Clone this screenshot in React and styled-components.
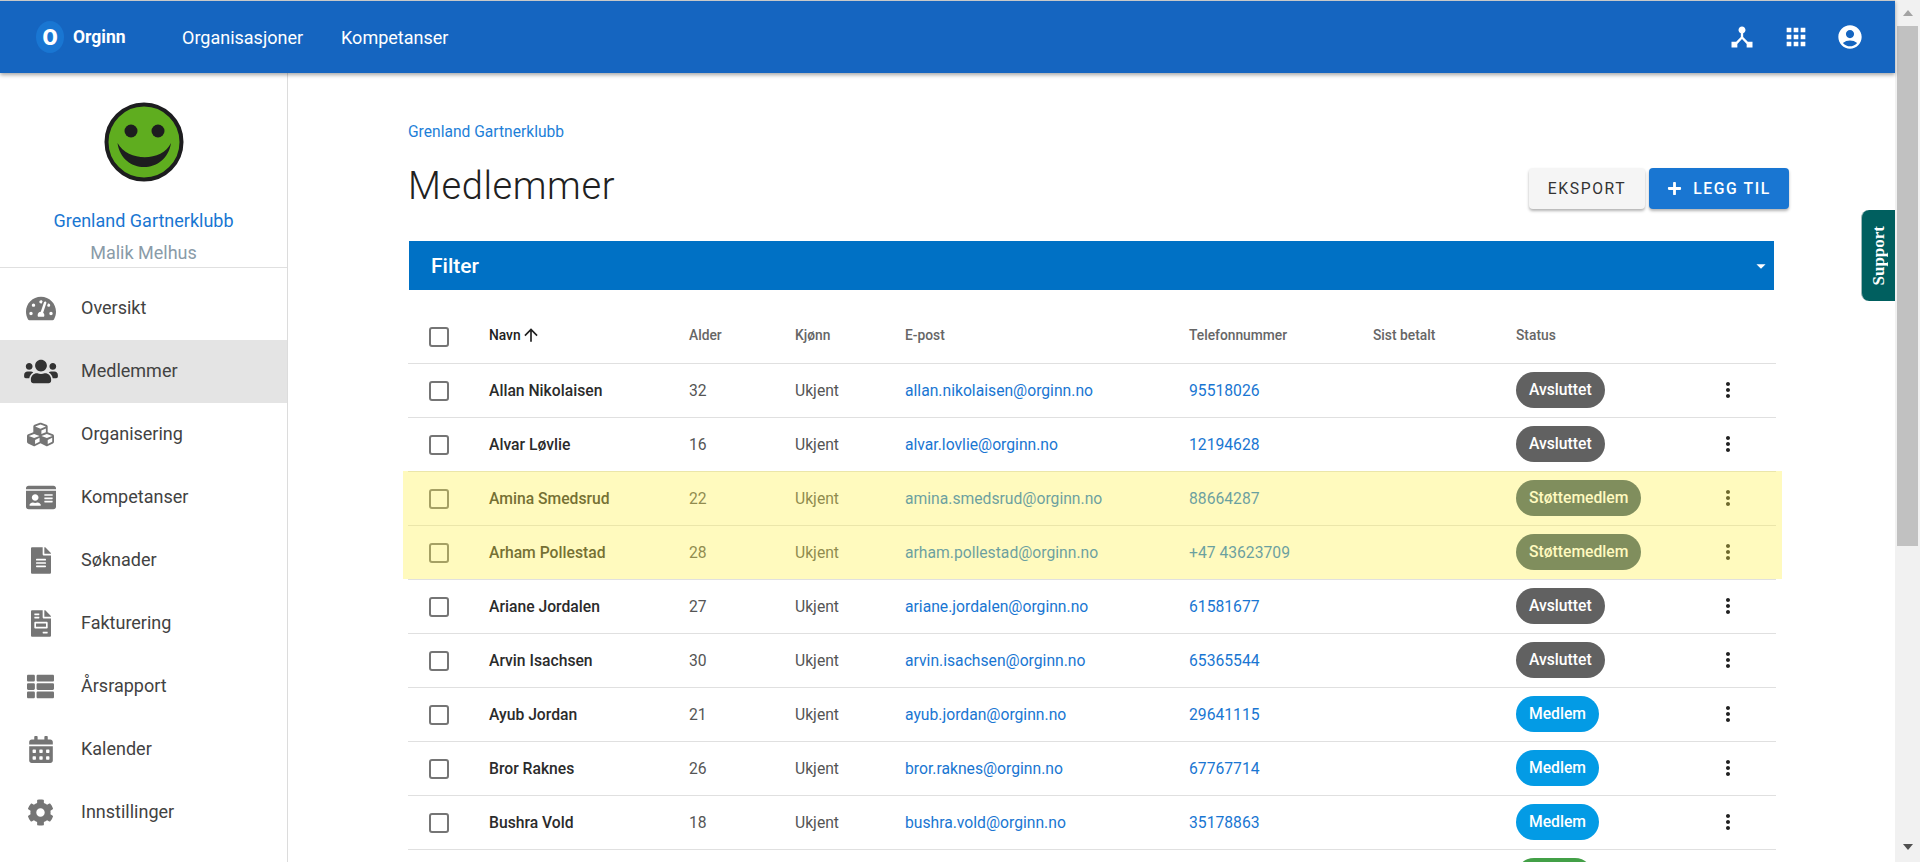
import React from 'react';
import styled, { createGlobalStyle } from 'styled-components';
import { MdDeviceHub, MdApps, MdAccountCircle, MdMoreVert, MdArrowUpward, MdArrowDropDown } from 'react-icons/md';
import { FaTachometerAlt, FaUsers, FaCubes, FaIdCard, FaFileAlt, FaFileInvoice, FaThList, FaCalendarAlt, FaCog, FaPlus } from 'react-icons/fa';

const GlobalStyle = createGlobalStyle`
  html, body {
    margin: 0;
    height: 862px;
    overflow: hidden;
    background: #fff;
    font-family: Roboto, 'Liberation Sans', sans-serif;
  }
  * { box-sizing: border-box; }
`;

const Shell = styled.div`
  display: flex;
  height: 862px;
  overflow: hidden;
`;

const Page = styled.div`
  position: relative;
  flex: 1;
  min-width: 0;
  display: flex;
  flex-direction: column;
`;

const TopBar = styled.header`
  position: relative;
  z-index: 3;
  flex: none;
  height: 73px;
  display: flex;
  align-items: center;
  border-top: 1px solid #c8c8c8;
  background: #1565c0;
  color: #fff;
  padding: 0 31px 0 36px;
  box-shadow: 0 2px 4px rgba(0, 0, 0, 0.35);
`;

const LogoMark = styled.div`
  width: 28px;
  height: 32px;
  border-radius: 50%;
  background: #1976d2;
  display: flex;
  align-items: center;
  justify-content: center;
  font-weight: 900;
  font-size: 22px;
`;

const LogoText = styled.div`
  margin-left: 9px;
  width: 109px;
  font-weight: 700;
  font-size: 17.5px;
`;

const NavLink = styled.a`
  font-size: 18px;
  font-weight: 400;
  margin-right: 38px;
`;

const TopActions = styled.div`
  margin-left: auto;
  display: flex;
  gap: 26px;
  font-size: 28px;
  svg { display: block; }
`;

const Body = styled.div`
  flex: 1;
  min-height: 0;
  display: flex;
`;

const Sidebar = styled.aside`
  flex: none;
  width: 288px;
  border-right: 1px solid #dcdcdc;
`;

const Profile = styled.div`
  height: 195px;
  padding-top: 29px;
  display: flex;
  flex-direction: column;
  align-items: center;
  border-bottom: 1px solid #e0e0e0;
`;

const OrgName = styled.div`
  margin-top: 27px;
  font-size: 18px;
  line-height: 24px;
  color: #1976d2;
`;

const UserName = styled.div`
  margin-top: 8px;
  font-size: 18px;
  line-height: 24px;
  color: #8a9ba8;
`;

const Menu = styled.nav`
  padding-top: 9px;
`;

const MenuItem = styled.a`
  height: 63px;
  display: flex;
  align-items: center;
  font-size: 18px;
  font-weight: 400;
  padding-bottom: 2px;
  color: #424242;
  background: ${p => (p.$active ? '#e4e4e4' : 'transparent')};
`;

const MenuIcon = styled.span`
  width: 81px;
  display: flex;
  justify-content: center;
  padding-top: 2px;
  color: ${p => (p.$active ? '#333' : '#757575')};
  svg {
    display: block;
    width: ${p => p.$width}px;
    height: 27px;
  }
`;

const Main = styled.main`
  flex: 1;
  min-width: 0;
  padding: 49px 0 0 120px;
`;

const Breadcrumb = styled.a`
  display: block;
  font-size: 15.6px;
  line-height: 20px;
  color: #1e7fd8;
`;

const TitleRow = styled.div`
  display: flex;
  align-items: center;
  justify-content: space-between;
  margin-top: 22px;
  padding-right: 106px;
  height: 49px;
`;

const Title = styled.h1`
  margin: 0 0 5px;
  font-size: 38px;
  font-weight: 300;
  color: #212121;
  letter-spacing: 0.6px;
`;

const Actions = styled.div`
  display: flex;
  gap: 4px;
`;

const Button = styled.button`
  height: 41px;
  display: flex;
  align-items: center;
  justify-content: center;
  gap: 11px;
  border: 0;
  border-radius: 4px;
  font-family: inherit;
  font-size: 15.7px;
  font-weight: ${p => (p.$primary ? 500 : 400)};
  letter-spacing: 1.6px;
  width: ${p => (p.$primary ? '140px' : '116px')};
  background: ${p => (p.$primary ? '#1976d2' : '#f5f5f5')};
  color: ${p => (p.$primary ? '#fff' : '#333')};
  box-shadow: 0 2px 3px rgba(0, 0, 0, 0.3);
  svg { font-size: 15px; }
`;

const FilterBar = styled.div`
  margin: 28px 0 0 1px;
  width: 1365px;
  height: 49px;
  display: flex;
  align-items: center;
  justify-content: space-between;
  padding: 0 2px 0 22px;
  background: #0071c5;
  color: #fff;
  font-size: 21px;
  font-weight: 500;
  svg { display: block; font-size: 22px; }
`;

const Table = styled.div`
  margin-top: 21px;
  width: 1368px;
`;

const gridColumns = '81px 200px 106px 110px 284px 184px 143px 200px 1fr';

const HeadRow = styled.div`
  display: grid;
  grid-template-columns: ${gridColumns};
  align-items: center;
  height: 53px;
  border-bottom: 1px solid #e0e0e0;
  font-size: 13.8px;
  font-weight: 500;
  color: #666;
`;

const HeadLabel = styled.span`
  display: flex;
  align-items: center;
  padding-bottom: 4px;
  color: ${p => (p.$sorted ? '#212121' : '#666')};
  svg { font-size: 20px; }
`;

const Row = styled.div`
  display: grid;
  grid-template-columns: ${gridColumns};
  align-items: center;
  height: 54px;
  border-bottom: 1px solid #e0e0e0;
  font-size: 15.7px;
  color: #555;
`;

const MarkedRows = styled.div`
  position: relative;
  &::after {
    content: '';
    position: absolute;
    inset: -1px -6px 1px -5px;
    background: rgba(255, 240, 70, 0.35);
    pointer-events: none;
  }
`;

const CheckCell = styled.span`
  padding-left: 21px;
`;

const Checkbox = styled.span`
  display: block;
  width: 20px;
  height: 20px;
  border: 2px solid #757575;
  border-radius: 3px;
`;

const Name = styled.span`
  font-weight: 500;
  color: #2b2b2b;
`;

const Link = styled.a`
  color: #1976d2;
`;

const Badge = styled.span`
  justify-self: start;
  height: 36px;
  min-width: ${p => p.$minWidth || 0}px;
  margin-bottom: 2px;
  padding: 0 13px;
  display: inline-flex;
  align-items: center;
  border-radius: 18px;
  font-size: 15.7px;
  font-weight: 500;
  color: #fff;
  background: ${p => p.$bg};
`;

const MoreCell = styled.span`
  font-size: 24px;
  margin-bottom: 2px;
  color: #212121;
  svg { display: block; }
`;

const Scrollbar = styled.div`
  flex: none;
  width: 25px;
  display: flex;
  flex-direction: column;
  align-items: center;
  background: #f1f1f1;
`;

const ScrollArrow = styled.span`
  flex: none;
  height: 26px;
  width: 100%;
  display: flex;
  justify-content: center;
  align-items: ${p => (p.$down ? 'flex-start' : 'center')};
  &::before {
    content: '';
    border-left: 5.5px solid transparent;
    border-right: 5.5px solid transparent;
    ${p => (p.$down ? 'border-top: 6px solid #505050; margin-top: 8px;' : 'border-bottom: 6px solid #a3a3a3;')}
  }
`;

const ScrollThumb = styled.div`
  flex: none;
  width: 21px;
  height: 520px;
  background: #c1c1c1;
`;

const ScrollSpace = styled.div`
  flex: 1;
`;

const SupportTab = styled.a`
  position: absolute;
  z-index: 2;
  right: 0;
  top: 210px;
  width: 34px;
  height: 91px;
  display: flex;
  align-items: center;
  justify-content: center;
  background: #005f5f;
  border-left: 1px solid #9db8b8;
  border-radius: 8px 0 0 8px;
  color: #fff;
  font-family: 'Liberation Serif', serif;
  font-weight: 700;
  font-size: 17px;
  writing-mode: vertical-rl;
  span { transform: rotate(180deg); }
`;

const menu = [
  ['Oversikt', FaTachometerAlt, 30],
  ['Medlemmer', FaUsers, 34],
  ['Organisering', FaCubes, 27],
  ['Kompetanser', FaIdCard, 30],
  ['Søknader', FaFileAlt, 20],
  ['Fakturering', FaFileInvoice, 20],
  ['Årsrapport', FaThList, 27],
  ['Kalender', FaCalendarAlt, 24],
  ['Innstillinger', FaCog, 27],
];

const statusColors = {
  Avsluttet: '#616161',
  'Støttemedlem': '#3d5a6b',
  Medlem: '#039be5',
};

const members = [
  ['Allan Nikolaisen', 32, 'allan.nikolaisen@orginn.no', '95518026', 'Avsluttet'],
  ['Alvar Løvlie', 16, 'alvar.lovlie@orginn.no', '12194628', 'Avsluttet'],
  ['Amina Smedsrud', 22, 'amina.smedsrud@orginn.no', '88664287', 'Støttemedlem'],
  ['Arham Pollestad', 28, 'arham.pollestad@orginn.no', '+47 43623709', 'Støttemedlem'],
  ['Ariane Jordalen', 27, 'ariane.jordalen@orginn.no', '61581677', 'Avsluttet'],
  ['Arvin Isachsen', 30, 'arvin.isachsen@orginn.no', '65365544', 'Avsluttet'],
  ['Ayub Jordan', 21, 'ayub.jordan@orginn.no', '29641115', 'Medlem'],
  ['Bror Raknes', 26, 'bror.raknes@orginn.no', '67767714', 'Medlem'],
  ['Bushra Vold', 18, 'bushra.vold@orginn.no', '35178863', 'Medlem'],
];

const Smiley = () => (
  <svg width="80" height="80" viewBox="0 0 80 80">
    <circle cx="40" cy="40" r="37.5" fill="#5fad1f" stroke="#1d1d1f" strokeWidth="4" />
    <circle cx="27" cy="29" r="6.5" fill="#1d1d1f" />
    <circle cx="54" cy="29" r="6.5" fill="#1d1d1f" />
    <path d="M13.5 41 C18 73 62 73 67 41 C58 60 24 60 13.5 41 Z" fill="#1d1d1f" />
  </svg>
);

const MemberRow = ({ member }) => {
  const [name, age, email, phone, status] = member;
  return (
    <Row>
      <CheckCell><Checkbox /></CheckCell>
      <Name>{name}</Name>
      <span>{age}</span>
      <span>Ukjent</span>
      <Link>{email}</Link>
      <Link>{phone}</Link>
      <span />
      <Badge $bg={statusColors[status]}>{status}</Badge>
      <MoreCell><MdMoreVert /></MoreCell>
    </Row>
  );
};

export default function App() {
  return (
    <Shell>
      <GlobalStyle />
      <Page>
        <TopBar>
          <LogoMark>O</LogoMark>
          <LogoText>Orginn</LogoText>
          <NavLink>Organisasjoner</NavLink>
          <NavLink>Kompetanser</NavLink>
          <TopActions>
            <MdDeviceHub />
            <MdApps />
            <MdAccountCircle />
          </TopActions>
        </TopBar>
        <Body>
          <Sidebar>
            <Profile>
              <Smiley />
              <OrgName>Grenland Gartnerklubb</OrgName>
              <UserName>Malik Melhus</UserName>
            </Profile>
            <Menu>
              {menu.map(([label, Icon, width]) => (
                <MenuItem key={label} $active={label === 'Medlemmer'}>
                  <MenuIcon $active={label === 'Medlemmer'} $width={width}><Icon /></MenuIcon>
                  {label}
                </MenuItem>
              ))}
            </Menu>
          </Sidebar>
          <Main>
            <Breadcrumb>Grenland Gartnerklubb</Breadcrumb>
            <TitleRow>
              <Title>Medlemmer</Title>
              <Actions>
                <Button>EKSPORT</Button>
                <Button $primary><FaPlus />LEGG TIL</Button>
              </Actions>
            </TitleRow>
            <FilterBar>
              Filter
              <MdArrowDropDown />
            </FilterBar>
            <Table>
              <HeadRow>
                <CheckCell><Checkbox /></CheckCell>
                <HeadLabel $sorted>Navn<MdArrowUpward /></HeadLabel>
                <HeadLabel>Alder</HeadLabel>
                <HeadLabel>Kjønn</HeadLabel>
                <HeadLabel>E-post</HeadLabel>
                <HeadLabel>Telefonnummer</HeadLabel>
                <HeadLabel>Sist betalt</HeadLabel>
                <HeadLabel>Status</HeadLabel>
                <span />
              </HeadRow>
              {members.slice(0, 2).map(m => <MemberRow key={m[0]} member={m} />)}
              <MarkedRows>
                {members.slice(2, 4).map(m => <MemberRow key={m[0]} member={m} />)}
              </MarkedRows>
              {members.slice(4).map(m => <MemberRow key={m[0]} member={m} />)}
              {/* next row is below the fold, only the top of its green badge shows */}
              <Row>
                <span />
                <span />
                <span />
                <span />
                <span />
                <span />
                <span />
                <Badge $bg="#43a047" $minWidth={77} />
              </Row>
            </Table>
          </Main>
        </Body>
        <SupportTab><span>Support</span></SupportTab>
      </Page>
      <Scrollbar>
        <ScrollArrow />
        <ScrollThumb />
        <ScrollSpace />
        <ScrollArrow $down />
      </Scrollbar>
    </Shell>
  );
}
